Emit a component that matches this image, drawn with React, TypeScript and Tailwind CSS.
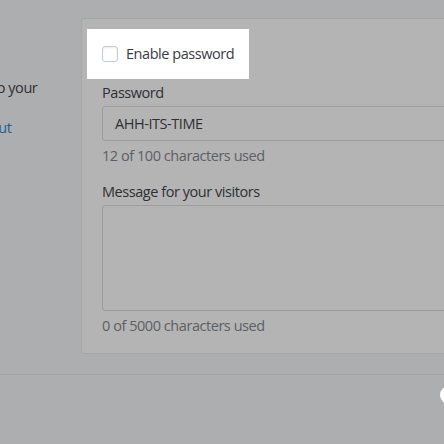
import React from "react";

const font = { fontFamily: '"Open Sans", "Noto Sans", sans-serif' };

export default function App() {
  return (
    <div
      className="relative w-[444px] h-[444px] overflow-hidden bg-[#adaeb0] text-[#2e3033] tracking-[-0.45px]"
      style={font}
    >
      <div className="flex items-start pt-[18px]">
        {/* left description column, clipped */}
        <div className="w-[81px] shrink-0 overflow-hidden pt-[60px] text-[14.5px] leading-5">
          <p className="-ml-[8px] whitespace-nowrap">to your</p>
          <p className="-ml-[26px] mt-[20px] whitespace-nowrap text-[#275f8c]">about</p>
        </div>

        {/* card */}
        <div className="w-[400px] shrink-0 rounded-l-[3px] border border-[#a6a6a6] bg-[#b4b4b4] px-5 pt-[10px] pb-[17px] text-[14.5px]">
          <div className="-ml-[15px] flex w-[162px] items-center gap-[8px] bg-white py-[15px] pl-[15px]">
            <span className="h-[16px] w-[16px] rounded-[3px] border border-[#c4cdd5] bg-white shadow-[inset_0_1px_2px_rgba(0,0,0,0.08)]" />
            <span className="leading-5 text-[#3a3c3f]">Enable password</span>
          </div>

          <label className="mt-[4px] block leading-5">Password</label>
          <div className="mt-[3px] flex h-[35px] items-center rounded-[3px] border border-[#9c9c9c] bg-[#b4b4b4] px-[12px]">
            AHH-ITS-TIME
          </div>
          <p className="mt-[5px] leading-5 text-[#5d6064]">12 of 100 characters used</p>

          <label className="mt-[16px] block leading-5">Message for your visitors</label>
          <div className="mt-[3px] h-[106px] rounded-[3px] border border-[#9c9c9c] bg-[#b4b4b4]" />
          <p className="mt-[5px] leading-5 text-[#5d6064]">0 of 5000 characters used</p>
        </div>
      </div>

      <div className="mt-[20px] border-t border-[#a3a4a6]" />

      <div className="absolute left-[440px] top-[386px] h-[18px] w-[18px] rounded-full bg-white" />
    </div>
  );
}
